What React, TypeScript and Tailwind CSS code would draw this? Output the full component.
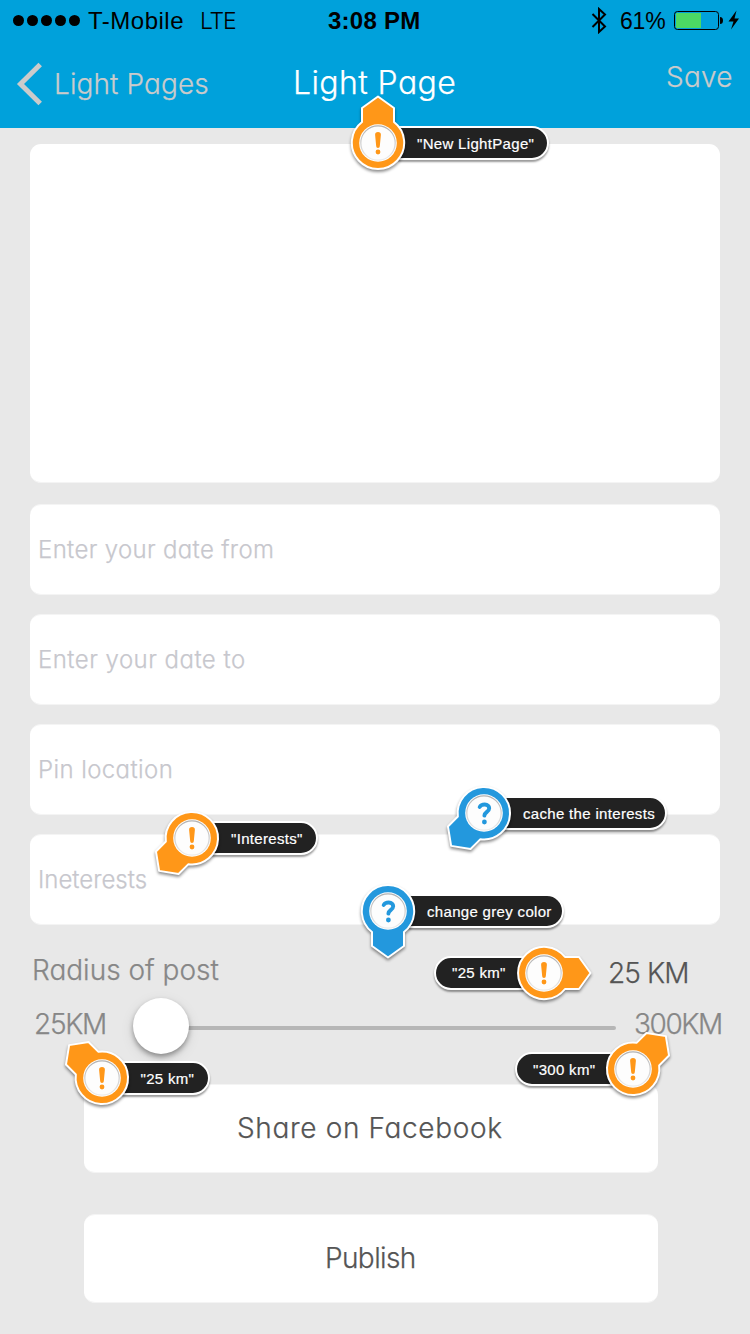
import React from "react";

const gothic =
  "font-['Century_Gothic','Inter',sans-serif] font-light [font-feature-settings:'cv11'] whitespace-nowrap [-webkit-text-stroke:0.25px_currentColor]";
const helvetica = "font-['Liberation_Sans',sans-serif] whitespace-nowrap";

type PinProps = {
  tone: "orange" | "blue";
  angle: number;
  label: string;
  place: string;
  labelClass: string;
  flip?: boolean;
};

function Pin({ tone, angle, label, place, labelClass, flip }: PinProps) {
  const fill = tone === "orange" ? "#ff9718" : "#2398dd";
  return (
    <div className={`absolute flex items-center ${flip ? "flex-row-reverse" : ""} ${place}`}>
      <svg
        className="relative z-10 h-14 w-14 shrink-0 overflow-visible drop-shadow-[0_2px_1.5px_rgba(0,0,0,0.45)]"
        viewBox="-28 -28 56 56"
      >
        <defs>
          <linearGradient id="ring" x1="0" y1="0" x2="0" y2="1">
            <stop offset="0" stopColor="#b0b0b0" />
            <stop offset="1" stopColor="#ececec" />
          </linearGradient>
        </defs>
        <path
          transform={`rotate(${angle})`}
          d="M-16 -35 L0 -46.5 L16 -35 V-21 A26.2 26.2 0 1 1 -16 -21 Z"
          fill={fill}
          stroke="#fff"
          strokeWidth="2"
          strokeLinejoin="round"
        />
        <circle r="18.8" fill="#fff" />
        <circle r="17.2" fill="#fdfdfd" stroke="url(#ring)" strokeWidth="1.2" />
        {tone === "orange" ? (
          <path d="M-2.9 -8.3 a2.9 2.6 0 0 1 5.8 0 L1.8 3.2 a1.8 1.7 0 0 1 -3.6 0 Z" fill={fill} />
        ) : (
          <path
            d="M-4.3 -6 C-3.4 -7.8 -1.8 -8.5 0.8 -8.5 C3.6 -8.5 5.2 -6.7 5.2 -4.7 C5.2 -1 0.6 -1.3 0.4 2.6"
            fill="none"
            stroke={fill}
            strokeWidth="3.9"
            strokeLinecap="round"
            strokeLinejoin="round"
          />
        )}
        <circle cx={tone === "orange" ? 0 : 0.4} cy="9" r="2.4" fill={fill} />
      </svg>
      <div
        className={`flex h-[34px] items-center border-2 border-white bg-[#222] text-[15px] leading-none tracking-[0.32px] text-white shadow-[0_2px_2px_rgba(0,0,0,0.4)] [-webkit-text-stroke:0.2px_white] ${helvetica} ${
          flip ? "-mr-2 rounded-l-full pl-4" : "-ml-2 rounded-r-full pl-[17px]"
        } ${labelClass}`}
      >
        {label}
      </div>
    </div>
  );
}

function Field({ label, tracking }: { label: string; tracking: string }) {
  return (
    <div
      className={`mb-[19px] flex h-[91px] items-center rounded-[11px] border-y border-[#f4f4f4] bg-white pl-2 text-2xl text-[#c7c7cd] ${tracking} ${gothic}`}
    >
      {label}
    </div>
  );
}

export default function App() {
  return (
    <div className="relative h-[1334px] w-[750px] overflow-hidden bg-[#e8e8e8]">
      <header className="h-32 bg-[#00a1db]">
        <div className={`flex h-10 items-center pl-[13px] text-2xl text-black ${helvetica}`}>
          <div className="flex gap-[3px]">
            {[0, 1, 2, 3, 4].map((i) => (
              <span key={i} className="h-[11px] w-[11px] rounded-full bg-black" />
            ))}
          </div>
          <span className="ml-2 w-[112px] pt-0.5 tracking-[0.5px]">T-Mobile</span>
          <span className="w-[128px] pt-0.5 font-['Inter'] text-[23px] font-light tracking-[-1.2px]">LTE</span>
          <span className="w-[263px] pt-0.5 font-bold tracking-[0.25px]">3:08 PM</span>
          <svg className="h-[27px] w-4" viewBox="0 0 16 27" fill="none" stroke="#000" strokeWidth="2">
            <path d="M1.5 7 L14 19.5 L8 25 V2 L14 7.5 L1.5 20" />
          </svg>
          <span className="ml-[13px] w-[54px] pt-0.5 text-[23px] tracking-[-0.2px]">61%</span>
          <svg className="h-6 w-[70px]" viewBox="0 0 70 24">
            <rect x=".5" y="3.5" width="44" height="18" rx="3" fill="none" stroke="#000" strokeWidth="1" />
            <rect x="2" y="5" width="25" height="15" fill="#4cd964" />
            <path d="M46 9 a3 3.5 0 0 1 0 7z" fill="#000" />
            <path d="M62.5 2.5 L54.5 13.5 H59.5 L57 21.5 L65 10.5 H60.5 Z" fill="#000" />
          </svg>
        </div>
        <div className={`flex h-[88px] text-[#cbcbcb] ${gothic}`}>
          <svg className="mt-[22px] ml-4 h-11 w-7" viewBox="0 0 28 44" fill="none" stroke="#cbcbcb" strokeWidth="5">
            <path d="M24.2 2.5 L4.5 22 L24.2 41.5" />
          </svg>
          <span className="mt-[26px] ml-[10px] w-[239px] text-[28px] leading-9 tracking-[0.1px]">Light Pages</span>
          <span className="mt-[23px] w-[373px] text-[32px] leading-10 tracking-[0.4px] text-white">Light Page</span>
          <span className="mt-[19px] text-[28px] leading-9 tracking-[0.25px]">Save</span>
        </div>
      </header>

      <main className="px-[30px] pt-4">
        <div className="mb-[21px] h-[339px] rounded-[11px] border-b border-[#f4f4f4] bg-white" />
        <Field label="Enter your date from" tracking="tracking-[0.34px]" />
        <Field label="Enter your date to" tracking="tracking-[0.48px]" />
        <Field label="Pin location" tracking="tracking-[0.4px]" />
        <Field label="Ineterests" tracking="tracking-[0px]" />

        <section className={`-mt-[19px] h-[159px] text-[28px] leading-9 text-[#878787] ${gothic}`}>
          <div className="flex h-[66px] pt-[27px] pl-[2px]">
            <span className="w-[576px]">Radius of post</span>
            <span className="mt-[3px] tracking-[-0.9px] text-[#555]">25 KM</span>
          </div>
          <div className="flex h-[70px] items-center pl-1">
            <span className="w-[99px] shrink-0 -translate-y-0.5 tracking-[-1.3px]">25KM</span>
            <div className="flex h-14 w-[483px] shrink-0 items-center">
              <div className="z-10 h-14 w-14 shrink-0 rounded-full bg-white shadow-[0_3px_5px_rgba(0,0,0,0.35),0_4px_14px_rgba(0,0,0,0.1)]" />
              <div className="mt-1 -ml-2 h-1 grow rounded-full bg-[#b6b6b6]" />
            </div>
            <span className="ml-[18px] -translate-y-0.5 tracking-[-1.4px]">300KM</span>
          </div>
        </section>

        <div className={`ml-[54px] w-[574px] text-[28px] text-[#555] ${gothic}`}>
          <button className="mb-[41px] flex h-[89px] w-full items-center rounded-[11px] border-y border-[#f4f4f4] bg-white pb-px pl-[153px] font-light tracking-[0.65px]">
            Share on Facebook
          </button>
          <button className="flex h-[89px] w-full items-center rounded-[11px] border-y border-[#f4f4f4] bg-white pb-px pl-[241px] font-light tracking-[-0.6px]">
            Publish
          </button>
        </div>
      </main>

      <Pin tone="orange" angle={0} label={'"New LightPage"'} place="left-[350px] top-[115px]" labelClass="w-[151px]" />
      <Pin tone="orange" angle={225} label={'"Interests"'} place="left-[164px] top-[810px]" labelClass="w-[106px]" />
      <Pin tone="blue" angle={225} label="cache the interests" place="left-[456px] top-[785px]" labelClass="w-[163px]" />
      <Pin tone="blue" angle={180} label="change grey color" place="left-[360px] top-[883px]" labelClass="w-[156px]" />
      <Pin tone="orange" angle={90} label={'"25 km"'} place="left-[434px] top-[945px]" labelClass="w-[90px] pb-0.5" flip />
      <Pin tone="orange" angle={315} label={'"25 km"'} place="left-[73.5px] top-[1050px]" labelClass="w-[88px]" />
      <Pin tone="orange" angle={45} label={'"300 km"'} place="left-[515px] top-[1041px]" labelClass="w-[98px]" flip />
    </div>
  );
}
